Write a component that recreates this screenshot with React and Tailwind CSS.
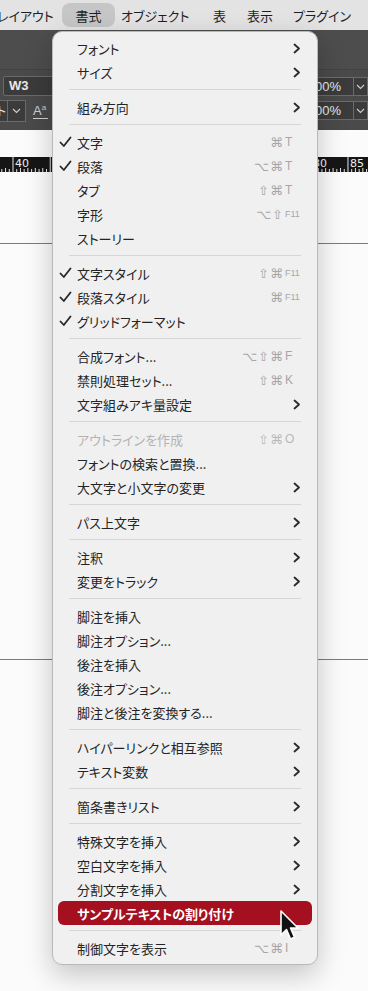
import React from "react";

const menuItems = [
  { label: "フォント", sub: true },
  { label: "サイズ", sub: true },
  "sep",
  { label: "組み方向", sub: true },
  "sep",
  { label: "文字", check: true, mods: "⌘", key: "T" },
  { label: "段落", check: true, mods: "⌥⌘", key: "T" },
  { label: "タブ", mods: "⇧⌘", key: "T" },
  { label: "字形", mods: "⌥⇧", key: "F11" },
  { label: "ストーリー" },
  "sep",
  { label: "文字スタイル", check: true, mods: "⇧⌘", key: "F11" },
  { label: "段落スタイル", check: true, mods: "⌘", key: "F11" },
  { label: "グリッドフォーマット", check: true },
  "sep",
  { label: "合成フォント...", mods: "⌥⇧⌘", key: "F" },
  { label: "禁則処理セット...", mods: "⇧⌘", key: "K" },
  { label: "文字組みアキ量設定", sub: true },
  "sep",
  { label: "アウトラインを作成", disabled: true, mods: "⇧⌘", key: "O" },
  { label: "フォントの検索と置換..." },
  { label: "大文字と小文字の変更", sub: true },
  "sep",
  { label: "パス上文字", sub: true },
  "sep",
  { label: "注釈", sub: true },
  { label: "変更をトラック", sub: true },
  "sep",
  { label: "脚注を挿入" },
  { label: "脚注オプション..." },
  { label: "後注を挿入" },
  { label: "後注オプション..." },
  { label: "脚注と後注を変換する..." },
  "sep",
  { label: "ハイパーリンクと相互参照", sub: true },
  { label: "テキスト変数", sub: true },
  "sep",
  { label: "箇条書きリスト", sub: true },
  "sep",
  { label: "特殊文字を挿入", sub: true },
  { label: "空白文字を挿入", sub: true },
  { label: "分割文字を挿入", sub: true },
  { label: "サンプルテキストの割り付け", active: true },
  "sep",
  { label: "制御文字を表示", mods: "⌥⌘", key: "I" },
];

function Check() {
  return (
    <svg width="14" height="12" viewBox="0 0 14 12">
      <path d="M1.5 6.5 L4.8 10 L11.5 1.5" fill="none" stroke="#262626" strokeWidth="1.8" strokeLinecap="round" strokeLinejoin="round" />
    </svg>
  );
}

function Chevron() {
  return (
    <svg width="8" height="11" viewBox="0 0 8 11">
      <path d="M1.5 1.5 L6 5.5 L1.5 9.5" fill="none" stroke="#2a2a2a" strokeWidth="1.8" strokeLinecap="round" strokeLinejoin="round" />
    </svg>
  );
}

function DownChevron() {
  return (
    <svg width="9" height="6" viewBox="0 0 9 6">
      <path d="M1 1 L4.5 4.5 L8 1" fill="none" stroke="#cfcfcf" strokeWidth="1.1" />
    </svg>
  );
}

function MenuRow({ item }) {
  if (item === "sep") {
    return (
      <div className="h-[11px] flex items-center mx-[16px]">
        <div className="h-px w-full bg-[#d6d6d6]" />
      </div>
    );
  }
  const textColor = item.active ? "text-white font-bold" : item.disabled ? "text-[#b3b3b3]" : "text-[#242424]";
  return (
    <div className={"h-[24px] flex items-center " + (item.active ? "mx-[5px] rounded-[6px] bg-[#a4101f]" : "")}>
      <div className={"flex items-center w-full h-full " + (item.active ? "pl-[1px] pr-[10px]" : "pl-[6px] pr-[15px]")}>
        <div className="w-[18px] flex items-center">{item.check && <Check />}</div>
        <span className={"text-[13px] leading-none whitespace-nowrap " + textColor}>{item.label}</span>
        <div className="flex-1" />
        {item.sub && (
          <div className="pr-[1px] flex items-center">
            <Chevron />
          </div>
        )}
        {item.key && (
          <div className={"flex items-center leading-none " + (item.disabled ? "text-[#b8b8b8]" : "text-[#a6a6a6]")}>
            <span className="text-[13px] tracking-[1px] font-['DejaVu_Sans',sans-serif]">{item.mods}</span>
            <span className={"w-[18px] pl-[1px] font-['Liberation_Sans',sans-serif] " + (item.key === "F11" ? "text-[9px]" : "text-[12px]")}>
              {item.key}
            </span>
          </div>
        )}
      </div>
    </div>
  );
}

function MenuBar() {
  return (
    <div className="h-[30px] bg-[#e3e3e3] flex items-center text-[13px] text-[#1e1e1e] leading-none [font-feature-settings:'palt']">
      <span className="w-[65px] ml-[-3px] whitespace-nowrap">レイアウト</span>
      <div className="w-[53px] h-[24px] rounded-[8px] bg-[#c6c6c6] flex items-center justify-center">書式</div>
      <span className="w-[92px] ml-[6px] whitespace-nowrap">オブジェクト</span>
      <span className="w-[34px]">表</span>
      <span className="w-[46px]">表示</span>
      <span className="whitespace-nowrap">プラグイン</span>
    </div>
  );
}

function Toolbar() {
  return (
    <div className="h-[100px] bg-[#4a4a4a] flex flex-col">
      <div className="h-[40px] bg-[#4d4d4d] border-b border-[#424242]" />
      <div className="flex justify-between mt-[6px]">
        <div className="flex flex-col gap-[4px]">
          <div className="ml-[3px] w-[70px] h-[20px] bg-[#3b3b3b] border border-[#6b6b6b] rounded-[2px] flex items-center pl-[5px] text-[13px] font-semibold text-[#e8e8e8] font-['Liberation_Sans',sans-serif]">
            W3
          </div>
          <div className="flex items-center h-[22px]">
            <div className="w-[8px] h-full bg-[#3b3b3b] border-y border-r border-[#6b6b6b] flex items-center justify-end overflow-hidden">
              <span className="text-[12px] text-[#e8e8e8] leading-none">ト</span>
            </div>
            <div className="w-[18px] h-full bg-[#3b3b3b] border-y border-r border-[#6b6b6b] flex items-center justify-center">
              <DownChevron />
            </div>
            <div className="ml-[7px] flex flex-col items-start text-[#cfcfcf] leading-none">
              <span className="text-[13px] font-['Liberation_Sans',sans-serif]">
                A<span className="text-[8px] align-top">a</span>
              </span>
              <div className="w-[15px] h-px bg-[#cfcfcf] mt-[1px]" />
            </div>
          </div>
        </div>
        <div className="flex flex-col gap-[5px] mt-[1px]">
          {[0, 1].map((i) => (
            <div key={i} className="flex h-[19px]">
              <div className="w-[50px] bg-[#3b3b3b] border-y border-l border-[#6b6b6b] flex items-center justify-end pr-[12px] text-[13px] text-[#e8e8e8] font-['Liberation_Sans',sans-serif]">
                100%
              </div>
              <div className="w-[15px] bg-[#3b3b3b] border border-[#6b6b6b] flex items-center justify-center">
                <DownChevron />
              </div>
            </div>
          ))}
        </div>
      </div>
    </div>
  );
}

function Ruler() {
  const ticks = [];
  for (let v = 36; v <= 88; v += 0.5) {
    const x = 13 + (v - 40) * 7.444;
    const major = v % 5 === 0;
    const h = major ? 15 : Number.isInteger(v) ? 4 : 3;
    ticks.push(<line key={v} x1={x} x2={x} y1={15 - h} y2={15} stroke="#e6e6e6" strokeWidth="1" />);
  }
  return (
    <div className="relative h-[15px] bg-[#161616] mt-[27px]">
      <svg width="368" height="15" className="absolute inset-0">
        {ticks}
      </svg>
      <div className="absolute left-[15px] top-[1px] text-[11px] leading-none text-[#f0f0f0] font-['DejaVu_Sans',sans-serif]">40</div>
      <div className="absolute left-[313px] top-[1px] text-[11px] leading-none text-[#f0f0f0] font-['DejaVu_Sans',sans-serif]">80</div>
      <div className="absolute left-[350px] top-[1px] text-[11px] leading-none text-[#f0f0f0] font-['DejaVu_Sans',sans-serif]">85</div>
    </div>
  );
}

function Cursor() {
  return (
    <svg width="22" height="34" viewBox="0 0 22 34" className="absolute left-[278px] top-[909px]">
      <path
        d="M3 2 L3 26 L8.5 20.5 L12.5 30 L16.5 28.3 L12.5 19 L20 19 Z"
        fill="#111"
        stroke="#fff"
        strokeWidth="1.6"
        strokeLinejoin="round"
      />
    </svg>
  );
}

export default function App() {
  return (
    <div className="relative w-[368px] h-[991px] overflow-hidden bg-[#fbfbfb] font-['Noto_Sans_CJK_JP',sans-serif]">
      <MenuBar />
      <Toolbar />
      <Ruler />
      <div className="h-px bg-[#4a87c8] mt-[71px]" />
      <div className="h-px bg-[#4a87c8] mt-[415px]" />

      <div className="absolute left-[52px] top-[31px] w-[266px] bg-[#f0f0f0] rounded-[10px] border border-[#b9b9b9] shadow-[0_10px_28px_rgba(0,0,0,0.22)] py-[4px] [font-feature-settings:'palt']">
        {menuItems.map((item, i) => (
          <MenuRow key={i} item={item} />
        ))}
      </div>
      <Cursor />
    </div>
  );
}
